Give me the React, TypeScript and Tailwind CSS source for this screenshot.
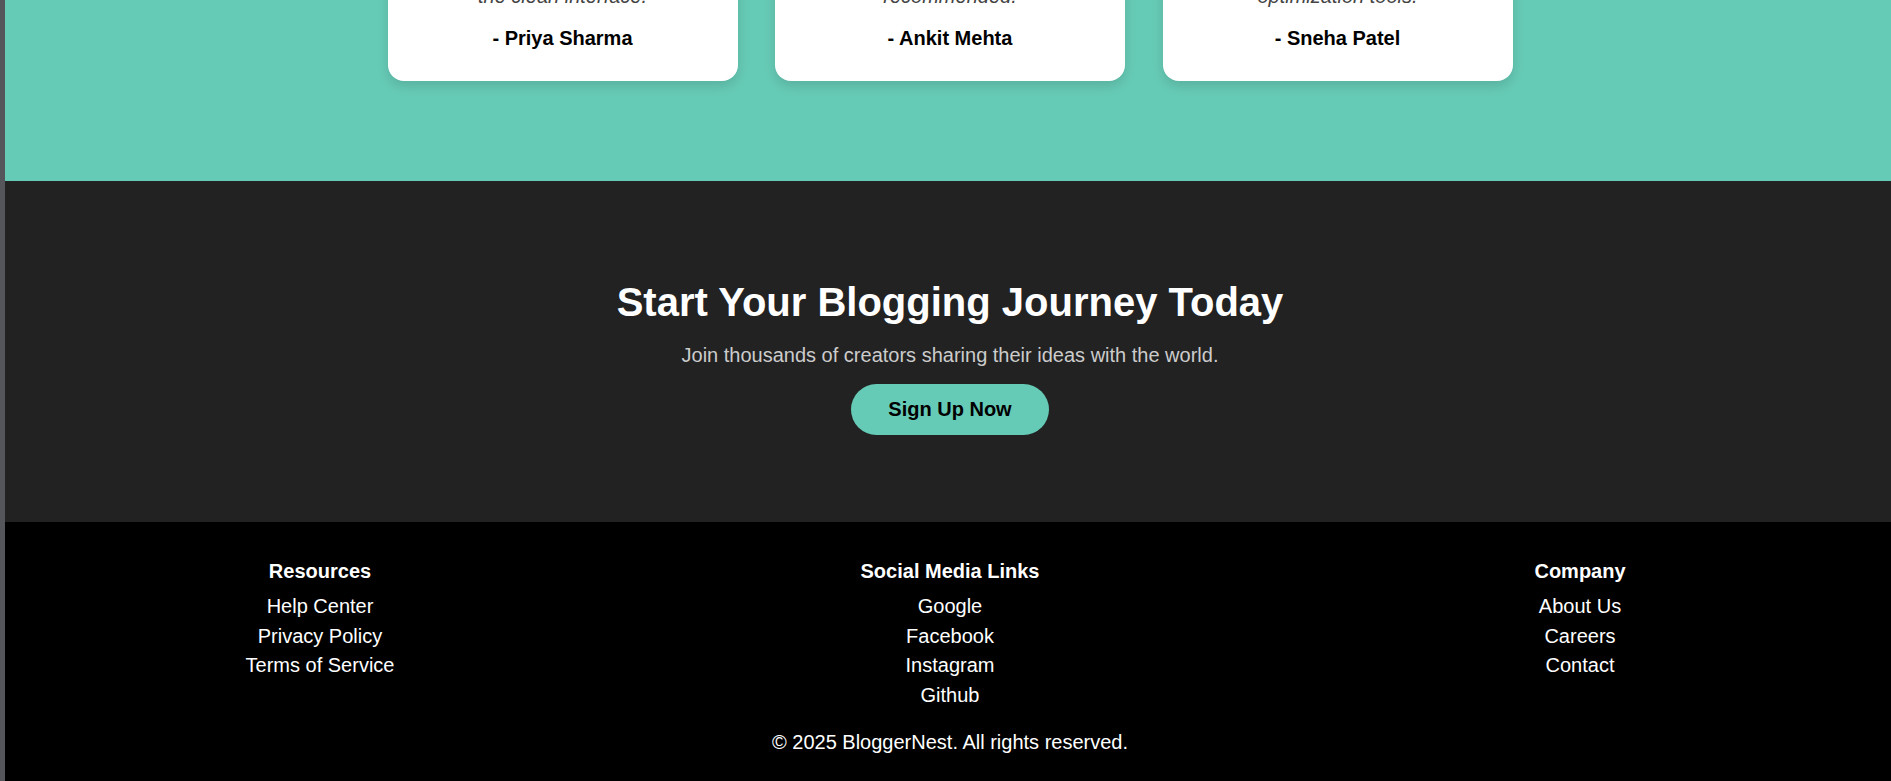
import React from 'react';

interface Testimonial {
  lines: string[];
  name: string;
}

const testimonials: Testimonial[] = [
  {
    lines: ['Starting my blog was', 'so easy. I love', 'the clean interface.'],
    name: 'Priya Sharma',
  },
  {
    lines: ['A wonderful place for', 'writers. Highly', 'recommended.'],
    name: 'Ankit Mehta',
  },
  {
    lines: ['My traffic doubled with', 'the built-in SEO', 'optimization tools.'],
    name: 'Sneha Patel',
  },
];

const footerColumns = [
  { title: 'Resources', links: ['Help Center', 'Privacy Policy', 'Terms of Service'] },
  { title: 'Social Media Links', links: ['Google', 'Facebook', 'Instagram', 'Github'] },
  { title: 'Company', links: ['About Us', 'Careers', 'Contact'] },
];

const TestimonialCard: React.FC<{ item: Testimonial }> = ({ item }) => (
  <div className="flex w-[350px] shrink-0 flex-col rounded-[16px] bg-white p-[31px] text-center shadow-[0_5px_12px_rgba(0,0,0,0.13)]">
    <p className="text-[20px] leading-[23px] italic text-[#444]">
      {item.lines.map((line, i) => (
        <React.Fragment key={i}>
          {line}
          {i < item.lines.length - 1 && <br />}
        </React.Fragment>
      ))}
    </p>
    <p className="mt-auto pt-[19px] text-[20px] leading-[23px] font-bold text-black">- {item.name}</p>
  </div>
);

const App: React.FC = () => {
  return (
    <div
      className="flex h-[781px] w-full overflow-hidden bg-black"
      style={{ fontFamily: '"Liberation Sans", Arial, sans-serif' }}
    >
      {/* window edge */}
      <div className="w-[5px] shrink-0 bg-[#55565c]" />

      <main className="flex w-[1890px] shrink-0 flex-col justify-end">
        {/* testimonials */}
        <section className="shrink-0 bg-[#66cbb6] pt-[60px] pb-[100px]">
          <h2 className="mb-[40px] text-center text-[40px] leading-[46px] font-bold text-white">
            What Our Users Say
          </h2>
          <div className="flex justify-center gap-[37.5px]">
            {testimonials.map((t) => (
              <TestimonialCard key={t.name} item={t} />
            ))}
          </div>
        </section>

        {/* call to action */}
        <section className="flex shrink-0 flex-col items-center bg-[#222222] pt-[98px] pb-[87px] text-center">
          <h2 className="text-[40px] leading-[46px] font-bold text-white">Start Your Blogging Journey Today</h2>
          <p className="mt-[19px] text-[20px] leading-[23px] text-[#cccccc]">
            Join thousands of creators sharing their ideas with the world.
          </p>
          <button className="mt-[17px] rounded-full bg-[#66cbb6] px-[37.5px] py-[14px] text-[20px] leading-[23px] font-bold text-black">
            Sign Up Now
          </button>
        </section>

        {/* footer */}
        <footer className="shrink-0 bg-black pt-[38px] pb-[27px] text-white">
          <div className="grid grid-cols-3 items-start text-center">
            {footerColumns.map((col) => (
              <div key={col.title} className="flex flex-col items-center">
                <h4 className="text-[20px] leading-[23px] font-bold">{col.title}</h4>
                <ul className="mt-[12px] flex flex-col gap-[6.5px]">
                  {col.links.map((link) => (
                    <li key={link} className="text-[20px] leading-[23px]">
                      <a href="#">{link}</a>
                    </li>
                  ))}
                </ul>
              </div>
            ))}
          </div>
          <p className="mt-[24.5px] text-center text-[20px] leading-[23px]">
            © 2025 BloggerNest. All rights reserved.
          </p>
        </footer>
      </main>
    </div>
  );
};

export default App;
